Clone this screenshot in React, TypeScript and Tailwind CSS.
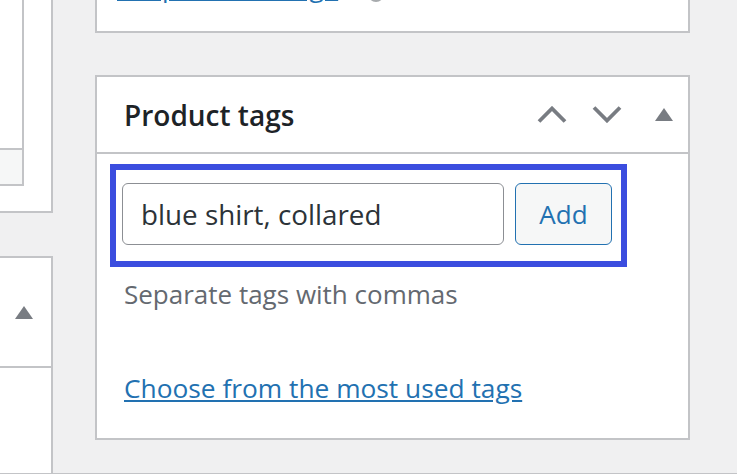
import React from "react"

function ChevronUp() {
  return (
    <svg width="30" height="17" viewBox="0 0 30 17">
      <path d="M2 15.5 15 2.5 28 15.5" fill="none" stroke="#787c82" strokeWidth="3.8" />
    </svg>
  )
}

function ChevronDown() {
  return (
    <svg width="30" height="17" viewBox="0 0 30 17">
      <path d="M2 1.5 15 14.5 28 1.5" fill="none" stroke="#787c82" strokeWidth="3.8" />
    </svg>
  )
}

function Triangle() {
  return (
    <svg width="18" height="13" viewBox="0 0 18 13">
      <path d="M9 0 18 13H0z" fill="#787c82" />
    </svg>
  )
}

export default function App() {
  return (
    <div className="w-[737px] h-[474px] overflow-hidden bg-[#f0f0f1] border-b border-[#c3c4c7] flex font-['Open_Sans','Noto_Sans',sans-serif]">
      {/* left column (cut off) */}
      <div className="w-[53px] flex flex-col shrink-0">
        <div className="h-[213px] bg-white border-r-2 border-b-2 border-[#c3c4c7]">
          <div className="w-[24px] border-r-2 border-[#c3c4c7]">
            <div className="h-[150px] border-b-2 border-[#c3c4c7]" />
            <div className="h-[36px] bg-[#f6f7f7] border-b-2 border-[#c3c4c7]" />
          </div>
        </div>
        <div className="mt-[43px] flex-1 bg-white border-t-2 border-r-2 border-[#c3c4c7]">
          <div className="h-[110px] flex items-center justify-end pr-[18px] border-b-2 border-[#c3c4c7]">
            <Triangle />
          </div>
        </div>
      </div>

      {/* main column */}
      <div className="ml-[42px] w-[595px] shrink-0 flex flex-col">
        <div className="h-[33px] bg-white border-x-2 border-b-2 border-[#c3c4c7] overflow-hidden">
          <div className="-mt-[31px] pl-[20px] flex items-center h-[36px]">
            <a href="#" className="text-[26px] leading-[36px] text-[#2271b1] underline">
              Set product image
            </a>
            <span className="ml-[30px] mt-[14px] w-[16px] h-[16px] rounded-full bg-[#a7aaad]" />
          </div>
        </div>

        <div className="mt-[42px] h-[365px] bg-white border-2 border-[#c3c4c7]">
          <div className="h-[77px] flex items-center pl-[27px] pr-[15px] border-b-2 border-[#c3c4c7]">
            <h2 className="text-[28px] font-semibold text-[#1d2327] leading-none">Product tags</h2>
            <div className="ml-auto flex items-center">
              <ChevronUp />
              <span className="ml-[25px]">
                <ChevronDown />
              </span>
              <span className="ml-[33px]">
                <Triangle />
              </span>
            </div>
          </div>

          <div className="pt-[10px]">
            <div className="ml-[13px] w-[517px] border-[6px] border-[#3b4ddf] pt-[13px] pb-[16px] pl-[6px] flex">
              <input
                readOnly
                value="blue shirt, collared"
                className="w-[382px] h-[62px] px-[18px] border-[1.5px] border-[#8c8f94] rounded-[6px] text-[27.8px] text-[#2c3338] bg-white outline-none"
              />
              <button className="ml-[11px] w-[97px] h-[62px] border-[1.5px] border-[#2271b1] rounded-[6px] bg-[#f6f7f7] text-[26px] text-[#2271b1]">
                Add
              </button>
            </div>
            <p className="mt-[9px] pl-[27px] text-[26px] leading-[36px] text-[#646970]">Separate tags with commas</p>
            <p className="mt-[58px] pl-[27px] text-[26.3px] leading-[36px]">
              <a href="#" className="text-[#2271b1] underline">
                Choose from the most used tags
              </a>
            </p>
          </div>
        </div>
      </div>
    </div>
  )
}
